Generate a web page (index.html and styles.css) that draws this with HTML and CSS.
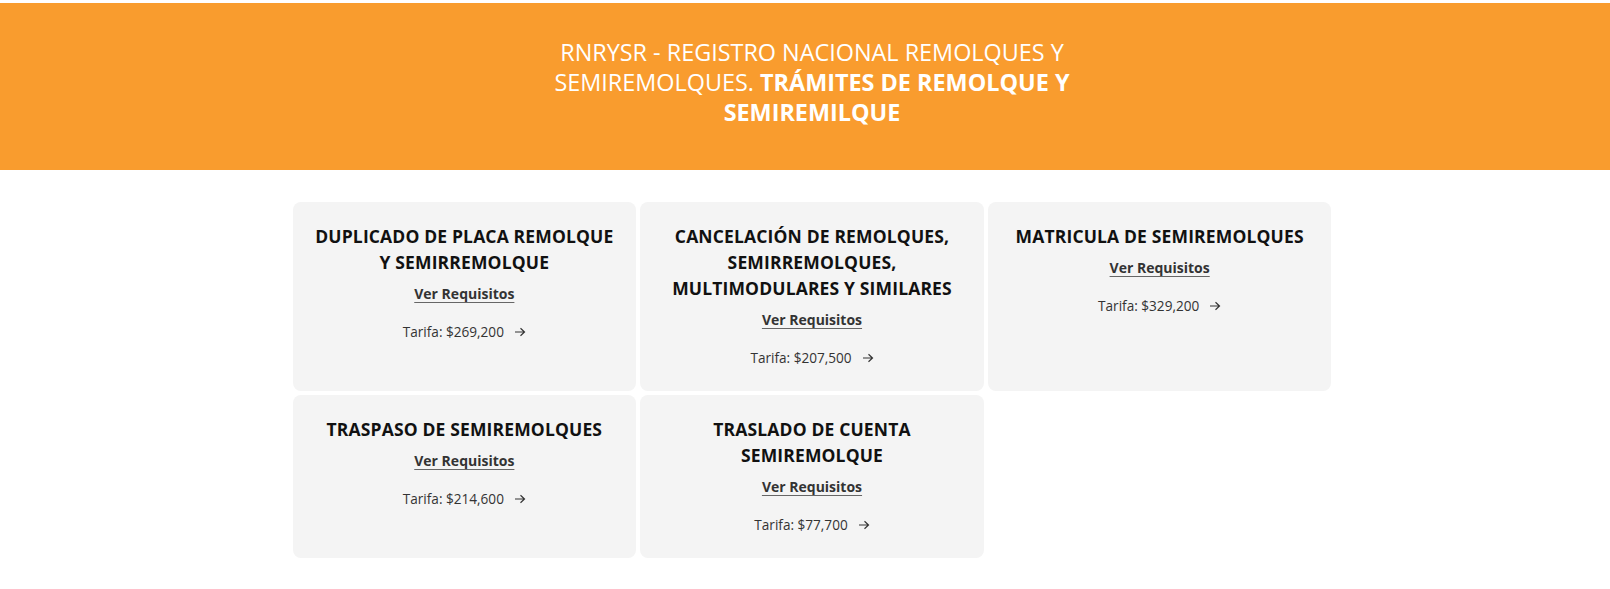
FILE: index.html
```html
<!DOCTYPE html>
<html lang="es">
<head>
<meta charset="utf-8">
<title>RNRYSR - Trámites de remolque y semiremolque</title>
<link rel="stylesheet" href="styles.css">
</head>
<body>
<header class="banner">
  <h1 class="banner-title">RNRYSR - REGISTRO NACIONAL REMOLQUES Y SEMIREMOLQUES. <strong>TRÁMITES DE REMOLQUE Y SEMIREMILQUE</strong></h1>
</header>
<main class="content">
  <div class="grid">
    <article class="card">
      <h2 class="card-title">DUPLICADO DE PLACA REMOLQUE Y SEMIRREMOLQUE</h2>
      <a class="card-link" href="#">Ver Requisitos</a>
      <p class="card-price">Tarifa: $269,200 <svg class="arrow" viewBox="0 0 12 10" width="12" height="10"><path d="M1 5h9.5M6.5 1.2L10.5 5 6.5 8.8" fill="none" stroke="currentColor" stroke-width="1.2"/></svg></p>
    </article>
    <article class="card">
      <h2 class="card-title">CANCELACIÓN DE REMOLQUES, SEMIRREMOLQUES, MULTIMODULARES Y SIMILARES</h2>
      <a class="card-link" href="#">Ver Requisitos</a>
      <p class="card-price">Tarifa: $207,500 <svg class="arrow" viewBox="0 0 12 10" width="12" height="10"><path d="M1 5h9.5M6.5 1.2L10.5 5 6.5 8.8" fill="none" stroke="currentColor" stroke-width="1.2"/></svg></p>
    </article>
    <article class="card">
      <h2 class="card-title">MATRICULA DE SEMIREMOLQUES</h2>
      <a class="card-link" href="#">Ver Requisitos</a>
      <p class="card-price">Tarifa: $329,200 <svg class="arrow" viewBox="0 0 12 10" width="12" height="10"><path d="M1 5h9.5M6.5 1.2L10.5 5 6.5 8.8" fill="none" stroke="currentColor" stroke-width="1.2"/></svg></p>
    </article>
    <article class="card">
      <h2 class="card-title">TRASPASO DE SEMIREMOLQUES</h2>
      <a class="card-link" href="#">Ver Requisitos</a>
      <p class="card-price">Tarifa: $214,600 <svg class="arrow" viewBox="0 0 12 10" width="12" height="10"><path d="M1 5h9.5M6.5 1.2L10.5 5 6.5 8.8" fill="none" stroke="currentColor" stroke-width="1.2"/></svg></p>
    </article>
    <article class="card">
      <h2 class="card-title">TRASLADO DE CUENTA SEMIREMOLQUE</h2>
      <a class="card-link" href="#">Ver Requisitos</a>
      <p class="card-price">Tarifa: $77,700 <svg class="arrow" viewBox="0 0 12 10" width="12" height="10"><path d="M1 5h9.5M6.5 1.2L10.5 5 6.5 8.8" fill="none" stroke="currentColor" stroke-width="1.2"/></svg></p>
    </article>
  </div>
</main>
</body>
</html>
```
FILE: styles.css
```css
* { box-sizing: border-box; }
html, body { margin: 0; padding: 0; background: #fff; }
body {
  font-family: "Open Sans", "Noto Sans", "DejaVu Sans", sans-serif;
  color: #1a1a1a;
  padding-top: 3px;
  padding-left: 14px;
}
.banner {
  background: #f99c2e;
  margin-left: -14px;
  padding: 34px 0 43px 14px;
  display: flex;
  justify-content: center;
}
.banner-title {
  margin: 0;
  max-width: 560px;
  text-align: center;
  font-size: 23.4px;
  line-height: 30px;
  font-weight: 400;
  color: #fff;
}
.banner-title strong { font-weight: 700; }
.content {
  padding-top: 32px;
  display: flex;
  justify-content: center;
}
.grid {
  width: 1039px;
  display: grid;
  grid-template-columns: repeat(3, 1fr);
  gap: 4px;
}
.card {
  background: #f4f4f4;
  border-radius: 8px;
  padding: 21px 20px 23px;
  display: flex;
  flex-direction: column;
  align-items: center;
  text-align: center;
}
.card-title {
  margin: 0;
  font-size: 17.5px;
  line-height: 26px;
  font-weight: 700;
  letter-spacing: 0.15px;
  color: #111;
}
.card-link {
  margin-top: 9px;
  font-size: 14px;
  line-height: 20px;
  font-weight: 700;
  color: #333;
  text-decoration: underline;
  text-decoration-color: #666;
  text-underline-offset: 3px;
}
.card-price {
  margin: 18px 0 0;
  font-size: 13.6px;
  line-height: 20px;
  color: #333;
  display: flex;
  align-items: center;
  gap: 10px;
}
.arrow { display: block; }
```
